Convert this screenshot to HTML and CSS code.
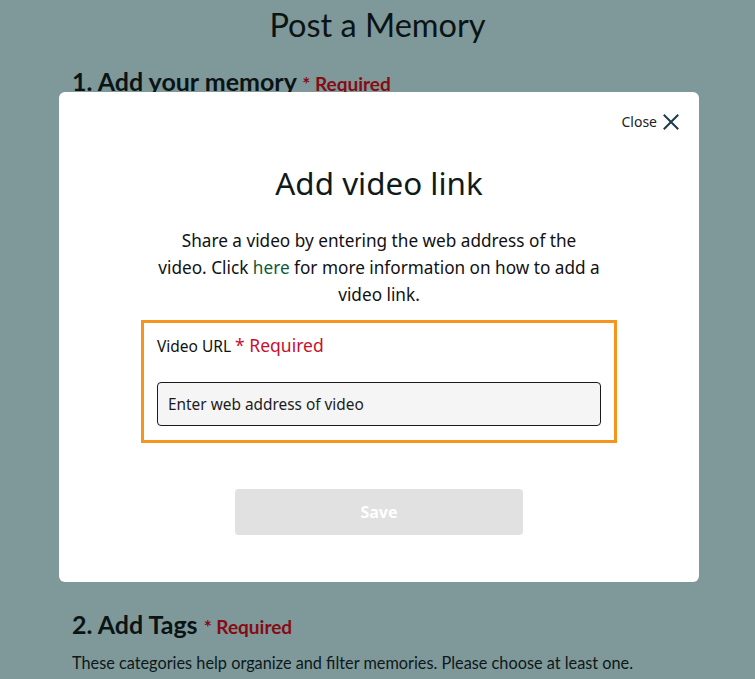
FILE: index.html
```html
<!DOCTYPE html>
<html lang="en">
<head>
<meta charset="utf-8">
<title>Post a Memory</title>
<link rel="stylesheet" href="styles.css">
</head>
<body>
<main class="page">
  <h1 class="page-title">Post a Memory</h1>
  <section class="step">
    <h2 class="step-title">1. Add your memory <span class="req">* Required</span></h2>
    <div class="step-spacer"></div>
  </section>
  <section class="step">
    <h2 class="step-title">2. Add Tags <span class="req">* Required</span></h2>
    <p class="step-desc">These categories help organize and filter memories. Please choose at least one.</p>
  </section>
</main>

<div class="modal" role="dialog" aria-labelledby="modal-title">
  <div class="modal-top">
    <button class="close-btn" type="button">Close
      <svg class="close-icon" width="16" height="16" viewBox="0 0 16 16" aria-hidden="true"><path d="M1.5 1.5 L14.5 14.5 M14.5 1.5 L1.5 14.5" stroke="#1e3a4c" stroke-width="2" fill="none" stroke-linecap="square"/></svg>
    </button>
  </div>
  <div class="modal-body">
    <h2 class="modal-title" id="modal-title">Add video link</h2>
    <p class="modal-text">Share a video by entering the web address of the video. Click <a href="#" class="link">here</a> for more information on how to add a video link.</p>
    <div class="field-box">
      <label class="field-label" for="url">Video URL <span class="field-req">* Required</span></label>
      <input class="field-input" id="url" type="text" placeholder="Enter web address of video">
    </div>
    <div class="actions">
      <button class="save-btn" type="button" disabled>Save</button>
    </div>
  </div>
</div>
</body>
</html>
```

FILE: styles.css
```css
html, body {
  margin: 0;
  padding: 0;
}
body {
  background: #7f999b;
  font-family: Lato, "Noto Sans", sans-serif;
  color: #0b1616;
  height: 679px;
  overflow: hidden;
}
.page {
  padding: 0 72px;
}
.page-title {
  margin: 0;
  padding-top: 5px;
  font-size: 32.5px;
  font-weight: 400;
  text-align: center;
  line-height: 40px;
  color: #0b1414;
}
.step-title {
  margin: 0;
  font-size: 25px;
  font-weight: 700;
  line-height: 30px;
  color: #0b1414;
}
.step:first-of-type .step-title {
  margin-top: 21px;
}
.step-spacer {
  height: 510px;
}
.req {
  font-size: 19px;
  color: #860b13;
}
.step-desc {
  margin: 11px 0 0;
  font-size: 16.3px;
  color: #0d1818;
}
.modal {
  position: fixed;
  left: 59px;
  top: 92px;
  width: 640px;
  height: 490px;
  background: #fff;
  border-radius: 6px;
  box-sizing: border-box;
  padding: 20px 20px 0;
}
.modal-top {
  display: flex;
  justify-content: flex-end;
}
.close-btn {
  display: flex;
  align-items: center;
  gap: 6px;
  background: none;
  border: 0;
  padding: 0;
  font-family: "Noto Sans", sans-serif;
  font-size: 14px;
  color: #222;
  cursor: pointer;
}
.modal-body {
  padding: 0 62px;
  display: flex;
  flex-direction: column;
  align-items: center;
  font-family: "Noto Sans", sans-serif;
}
.modal-title {
  margin: 32px 0 0;
  font-family: "Noto Sans", sans-serif;
  font-size: 31.4px;
  font-weight: 400;
  line-height: 40px;
  color: #0f1a1a;
}
.modal-text {
  margin: 24px 0 0;
  width: 445px;
  font-size: 17.2px;
  line-height: 27px;
  text-align: center;
  color: #111;
}
.link {
  color: #0b5a3a;
  text-decoration: none;
}
.field-box {
  margin-top: 12px;
  align-self: stretch;
  border: 3px solid #f7941d;
  padding: 10px 13px 14px;
  display: flex;
  flex-direction: column;
}
.field-label {
  font-size: 15.5px;
  line-height: 24px;
  color: #111;
}
.field-req {
  font-size: 17.5px;
  color: #c8102e;
}
.field-input {
  margin-top: 24px;
  height: 44px;
  box-sizing: border-box;
  border: 1px solid #1a1a1a;
  border-radius: 4px;
  background: #f5f5f5;
  padding: 0 10px;
  font-family: "Noto Sans", sans-serif;
  font-size: 15.4px;
}
.field-input::placeholder {
  color: #1c1c1c;
  opacity: 1;
}
.actions {
  margin-top: 46px;
}
.save-btn {
  width: 288px;
  height: 46px;
  border: 0;
  border-radius: 4px;
  background: #e1e1e1;
  color: #fff;
  font-family: "Noto Sans", sans-serif;
  font-size: 16px;
  font-weight: 700;
}
```
